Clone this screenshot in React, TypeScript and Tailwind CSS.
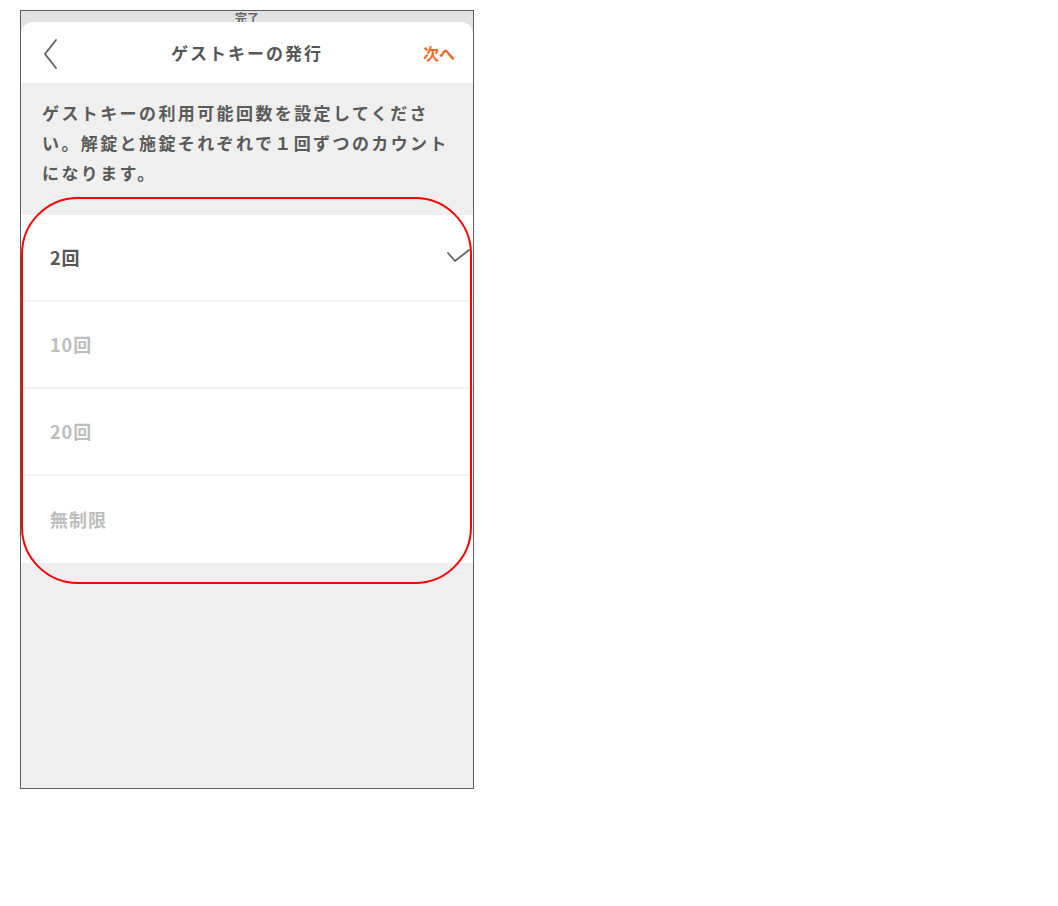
import React from 'react'

const options = [
    { label: '2回', selected: true },
    { label: '10回', selected: false },
    { label: '20回', selected: false },
    { label: '無制限', selected: false },
]

const App = () => {
    return (
        <main className="min-h-screen bg-white pt-[10px] pl-[20px]" style={{ fontFamily: '"Noto Sans CJK JP", "Noto Sans", sans-serif' }}>
            <div className="relative w-[454px] h-[779px] border border-[#5b5b5b] bg-[#efefef] overflow-hidden">

                {/* status strip + header sheet */}
                <div className="bg-[#e2e2e2] pt-[11px] relative">
                    <div className="absolute top-[1px] left-0 w-full text-center text-[12px] font-bold text-[#666] leading-none">完了</div>
                    <div className="relative bg-white rounded-t-[12px] h-[61px] flex items-center justify-between px-[18px]">
                        <svg width="20" height="32" viewBox="0 0 20 32" fill="none" className="ml-[2px] mt-[2px]">
                            <path d="M15 2 L4 16 L15 30" stroke="#666" strokeWidth="2" strokeLinecap="round" strokeLinejoin="round" />
                        </svg>
                        <h1 className="absolute left-0 right-0 text-center text-[17px] font-bold text-[#555] tracking-[2px] pointer-events-none">ゲストキーの発行</h1>
                        <span className="text-[16px] font-bold text-[#f06a2c]">次へ</span>
                    </div>
                </div>

                {/* description */}
                <div className="pt-[15px] pb-[27px] pl-[21px] text-[17px] font-bold text-[#5a5a5a] leading-[30px] tracking-[2.4px]">
                    <div className="whitespace-nowrap">ゲストキーの利用可能回数を設定してくださ</div>
                    <div className="whitespace-nowrap">い。解錠と施錠それぞれで１回ずつのカウント</div>
                    <div className="whitespace-nowrap">になります。</div>
                </div>

                {/* options */}
                <div className="bg-white">
                    {options.map((opt, index) => (
                        <div key={index} className={`h-[87px] flex items-center justify-between pl-[29px] pr-[2px] ${index < options.length - 1 ? 'border-b-2 border-[#f2f2f2]' : ''}`}>
                            <span className={`text-[18px] font-bold tracking-[1px] ${opt.selected ? 'text-[#555]' : 'text-[#bdbdbd]'}`}>{opt.label}</span>
                            {opt.selected && (
                                <svg width="24" height="16" viewBox="0 0 24 16" fill="none" className="mb-[2px]">
                                    <path d="M1 4 L8 12 L22 1" stroke="#666" strokeWidth="1.8" strokeLinecap="round" strokeLinejoin="round" />
                                </svg>
                            )}
                        </div>
                    ))}
                </div>

                {/* red annotation */}
                <div className="absolute left-0 top-[186px] w-[451px] h-[387px] border-2 border-[#ff0000] rounded-[57px] pointer-events-none"></div>
            </div>
        </main>
    )
}

export default App
